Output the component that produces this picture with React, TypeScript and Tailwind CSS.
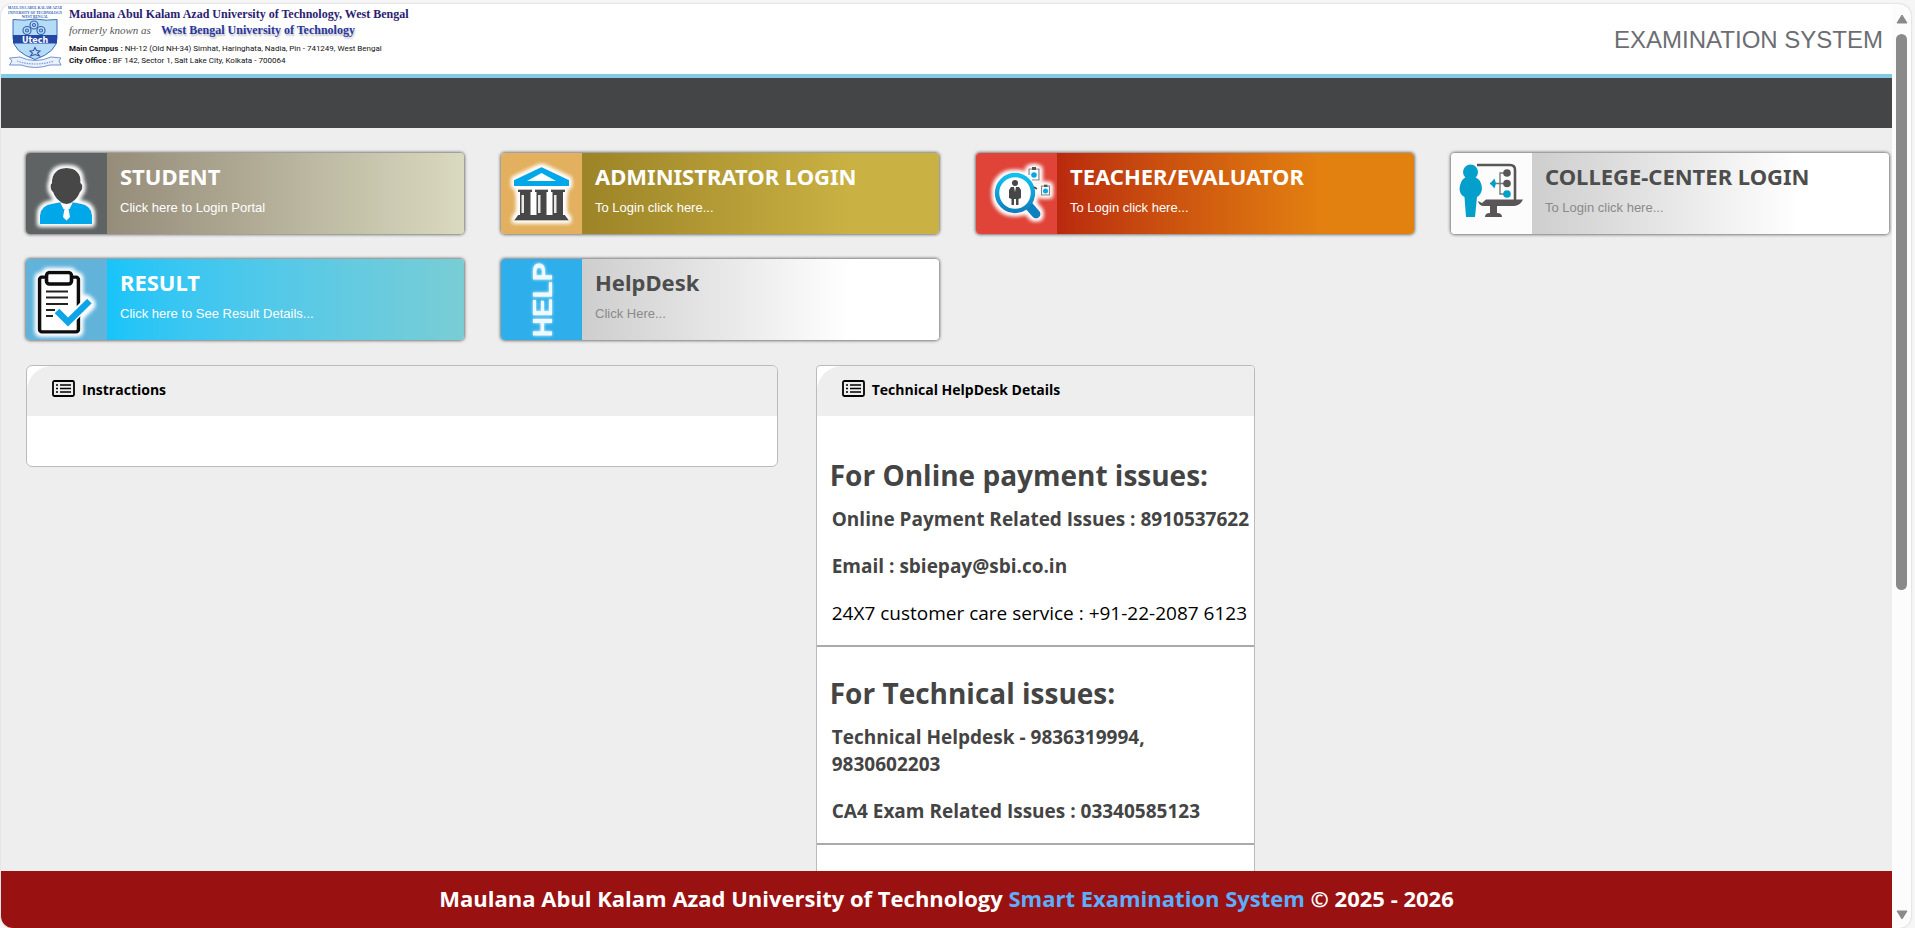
import type { ReactNode } from "react";

const uiFont = "font-['Noto_Sans',sans-serif]";
const openFont = "font-['Open_Sans','Noto_Sans',sans-serif]";
const arialFont = "font-['Liberation_Sans',Arial,sans-serif]";

function Crest() {
  return (
    <svg viewBox="0 0 54 64" className="h-16 w-[54px] shrink-0" role="img" aria-label="University crest">
      <g fill="#2f62b5" fontFamily="Liberation Serif, serif" fontWeight="700" textAnchor="middle">
        <text x="27" y="5" fontSize="3.600">MAULANA ABUL KALAM AZAD</text>
        <text x="27" y="9.500" fontSize="3.600">UNIVERSITY OF TECHNOLOGY,</text>
        <text x="27" y="14" fontSize="3.600">WEST BENGAL</text>
      </g>
      <path d="M5 15.500 Q16 17 27 15 Q38 17 49 15.500 V34 Q49 48 27 55.500 Q5 48 5 34 Z" fill="#b4dcf6" stroke="#3f6cbb" strokeWidth="1" />
      <g fill="none" stroke="#3a63b0" strokeWidth="1.200">
        <circle cx="26" cy="21" r="4" />
        <circle cx="19" cy="26.500" r="4" />
        <circle cx="33" cy="26.500" r="4" />
        <circle cx="26" cy="21" r="1.500" />
        <circle cx="19" cy="26.500" r="1.500" />
        <circle cx="33" cy="26.500" r="1.500" />
      </g>
      <path d="M5 31 H49 V39.500 H5 Z" fill="#2447a5" />
      <text x="27" y="38.500" fill="#fff" fontFamily="DejaVu Sans, sans-serif" fontWeight="700" fontSize="8" textAnchor="middle">Utech</text>
      <path d="M27 43.500 l1.500 3 3.500 .5 -2.500 2 2 3 -4.500 -1.500 -4.500 1.500 2 -3 -2.500 -2 3.500 -.5 Z" fill="none" stroke="#3a56a8" strokeWidth="1.100" />
      <path d="M1.500 54 L12 53 Q27 60 43 53 L53 54 L51 57 L53 61 H42 Q27 66 13 61 H1.500 L4 57 Z" fill="#e9f2fc" stroke="#5578c2" strokeWidth=".8" />
      <path d="M9 57 Q27 63 46 57" fill="none" stroke="#7f9bd3" strokeWidth="1.200" strokeDasharray="1.500 1" />
    </svg>
  );
}

function Glow({ id }: { id: string }) {
  return (
    <filter id={id} x="-30%" y="-30%" width="160%" height="160%">
      <feMorphology in="SourceAlpha" operator="dilate" radius="1.500" />
      <feGaussianBlur stdDeviation="2" result="halo" />
      <feFlood floodColor="#fff" />
      <feComposite in2="halo" operator="in" result="white" />
      <feMerge>
        <feMergeNode in="white" />
        <feMergeNode in="white" />
        <feMergeNode in="SourceGraphic" />
      </feMerge>
    </filter>
  );
}

const iconBox = "block size-[81px]";

function StudentIcon() {
  return (
    <svg viewBox="0 0 81 81" className={iconBox} aria-hidden="true">
      <defs><Glow id="g-student" /></defs>
      <g filter="url(#g-student)">
        <path d="M14 71 V62 Q15 52 27 50.500 L35 49 L40.500 55 L46 49 L54 50.500 Q65 52 66 62 V71 Z" fill="#04a7e9" />
        <path d="M40.500 52 L34 49 L37.500 56 L38.500 56 L37 64 L40.500 67.500 L44 64 L42.500 56 L43.500 56 L47 49 Z" fill="#fff" />
        <path d="M40.500 15 C50 15 55.500 21 54.500 30 C57.500 31 56.500 38 54 39 C52 45 46 51 40.500 51 C35 51 29 45 27 39 C24.500 38 23.500 31 26 30 C25.500 21 31 15 40.500 15 Z" fill="#474747" />
      </g>
    </svg>
  );
}

function BankIcon() {
  return (
    <svg viewBox="0 0 81 81" className={iconBox} aria-hidden="true">
      <defs><Glow id="g-bank" /></defs>
      <g filter="url(#g-bank)">
        <path d="M18 37 H63 V62 H18 Z" fill="#fff" />
        <path d="M40.500 14 L68 27 V33 H13 V27 Z" fill="#04a7e9" />
        <path d="M40.500 20 L55 28 H26 Z" fill="#fff" />
        <g fill="#474747">
          <path d="M17 36.500 H31 V39 H29.500 V62 H19 V39 H17 Z" />
          <path d="M34 36.500 H47 V39 H45.500 V62 H35.500 V39 H34 Z" />
          <path d="M50 36.500 H64 V39 H62 V62 H51.500 V39 H50 Z" />
          <path d="M17 62 H64 L68 67.500 H13 Z" />
        </g>
        <g fill="#e8e8e8">
          <path d="M20.500 42 H23 V60 H20.500 Z M37 42 H39.500 V60 H37 Z M53 42 H55.500 V60 H53 Z" />
        </g>
      </g>
    </svg>
  );
}

function TeacherIcon() {
  return (
    <svg viewBox="0 0 81 81" className={iconBox} aria-hidden="true">
      <defs>
        <Glow id="g-teacher" />
        <linearGradient id="lens" x1="0" y1="0" x2="0" y2="1">
          <stop offset="0" stopColor="#0cc3ee" />
          <stop offset="1" stopColor="#0880c0" />
        </linearGradient>
      </defs>
      <g filter="url(#g-teacher)">
        <path d="M53 53 L60 61" stroke="#0880c0" strokeWidth="9" strokeLinecap="round" />
        <circle cx="39" cy="40" r="18" fill="#fff" stroke="url(#lens)" strokeWidth="4.500" />
        <circle cx="39" cy="30" r="3" fill="#474747" />
        <path d="M35 34 H43 L45 37 V45 L42.500 46 V52 H40 V46 H38 V52 H35.500 V46 L33 45 V37 Z" fill="#474747" />
        <path d="M38 34 L39 39 L40 34 Z" fill="#fff" />
        <path d="M58 34 L61 36" stroke="#474747" strokeWidth="2" />
        <path d="M53 22 V16 H63 V27 H56" fill="#fff" stroke="#777" strokeWidth="1.200" />
        <path d="M56 14 H60 V17 H56 Z" fill="#555" />
        <circle cx="58" cy="22" r="2.800" fill="#04a7e9" />
        <rect x="65.500" y="33" width="8" height="9" fill="#fff" stroke="#888" strokeWidth="1.200" />
        <path d="M68 31.500 H71.500 V34 H68 Z" fill="#555" />
        <circle cx="69.500" cy="38" r="2.500" fill="#04a7e9" />
      </g>
    </svg>
  );
}

function CollegeIcon() {
  return (
    <svg viewBox="0 0 81 81" className={iconBox} aria-hidden="true">
      <path d="M26 12 H59 Q64 12 64 17 V47" fill="none" stroke="#5a5658" strokeWidth="2.600" />
      <path d="M27 48 L31 50 L35 46.500 H72 Q69 53 63 53 H33 Q28 53 27 48 Z" fill="#5a5658" />
      <path d="M39 52 H46 V60 Q51 60 51 64 H34 Q34 60 39 60 Z" fill="#5a5658" />
      <path d="M39 30.500 H55 M55 20 H49 V41 H55" fill="none" stroke="#777" strokeWidth="1.400" />
      <circle cx="56" cy="20" r="3.800" fill="#5a5658" />
      <circle cx="56" cy="30.500" r="3.800" fill="#5a5658" />
      <circle cx="56" cy="41" r="3.800" fill="#04a0cb" />
      <path d="M39 30.500 L43.500 25.500 L45 30.500 L43.500 35.500 Z" fill="#04a0cb" />
      <g fill="#04a0cb">
        <circle cx="19.500" cy="19" r="7.500" />
        <path d="M14 24.500 H25 Q31 28 31 36 Q30 42 26 44 L24 64 H15 L13.500 44 Q9 42 8.500 36 Q9 28 14 24.500 Z" />
      </g>
    </svg>
  );
}

function ResultIcon() {
  return (
    <svg viewBox="0 0 81 81" className={iconBox} aria-hidden="true">
      <defs><Glow id="g-result" /></defs>
      <g filter="url(#g-result)">
        <rect x="13.500" y="18" width="39" height="55" rx="2.500" fill="#fff" stroke="#0b0b0b" strokeWidth="3.600" />
        <rect x="20.500" y="13.500" width="25" height="11.500" rx="3" fill="#fff" stroke="#0b0b0b" strokeWidth="3.600" />
        <path d="M20 32.500 H42 M20 38.500 H42 M20 45 H42 M20 51 H29 M20 57 H27" stroke="#222" strokeWidth="2.200" />
        <path d="M32 51 L42 62.500 L63 42" fill="none" stroke="#fff" strokeWidth="10" />
        <path d="M31 52 L42 63 L63.500 42" fill="none" stroke="#0ba4e8" strokeWidth="6.500" />
      </g>
    </svg>
  );
}

function HelpIcon() {
  return (
    <svg viewBox="0 0 81 81" className={iconBox} aria-hidden="true">
      <defs>
        <filter id="g-help" x="-20%" y="-20%" width="140%" height="140%">
          <feGaussianBlur stdDeviation="1.500" result="soft" />
          <feMerge>
            <feMergeNode in="soft" />
            <feMergeNode in="SourceGraphic" />
          </feMerge>
        </filter>
      </defs>
      <text
        transform="rotate(-90 41 41)"
        x="41"
        y="51"
        textAnchor="middle"
        fill="#eefaff"
        fontSize="28"
        fontWeight="700"
        fontFamily="Liberation Sans, sans-serif"
        filter="url(#g-help)"
      >
        HELP
      </text>
    </svg>
  );
}

type Tile = {
  title: string;
  note: string;
  icon: ReactNode;
  iconBg: string;
  bodyBg: string;
  titleColor: string;
  noteColor: string;
};

const tiles: Tile[] = [
  {
    title: "STUDENT", note: "Click here to Login Portal", icon: <StudentIcon />,
    iconBg: "bg-[#5f6364]", bodyBg: "bg-linear-to-r from-[#958c79] to-[#dadac0]",
    titleColor: "text-white", noteColor: "text-white",
  },
  {
    title: "ADMINISTRATOR LOGIN", note: "To Login click here...", icon: <BankIcon />,
    iconBg: "bg-[#e2b05e]", bodyBg: "bg-linear-to-r from-[#9c8427] to-[#cab143] to-75%",
    titleColor: "text-white", noteColor: "text-white",
  },
  {
    title: "TEACHER/EVALUATOR", note: "To Login click here...", icon: <TeacherIcon />,
    iconBg: "bg-[#e04338]", bodyBg: "bg-linear-to-r from-[#b9290e] to-[#e38110] to-75%",
    titleColor: "text-white", noteColor: "text-white",
  },
  {
    title: "COLLEGE-CENTER LOGIN", note: "To Login click here...", icon: <CollegeIcon />,
    iconBg: "bg-[#fcfcfc]", bodyBg: "bg-linear-to-r from-[#cecece] to-white to-75%",
    titleColor: "text-[#4d4d4d]", noteColor: "text-[#8a8a8a]",
  },
  {
    title: "RESULT", note: "Click here to See Result Details...", icon: <ResultIcon />,
    iconBg: "bg-[#62b3da]", bodyBg: "bg-linear-to-r from-[#16c4f9] to-[#78cdd5]",
    titleColor: "text-white", noteColor: "text-white",
  },
  {
    title: "HelpDesk", note: "Click Here...", icon: <HelpIcon />,
    iconBg: "bg-[#2eaeea]", bodyBg: "bg-linear-to-r from-[#cecece] to-white to-75%",
    titleColor: "text-[#4d4d4d]", noteColor: "text-[#8a8a8a]",
  },
];

function TileLink({ tile }: { tile: Tile }) {
  return (
    <a href="#" className="flex overflow-hidden rounded-sm shadow-[0_0_3px_1px_#777]">
      <span className={`shrink-0 ${tile.iconBg}`}>{tile.icon}</span>
      <span className={`flex grow flex-col gap-2.5 pt-[9px] pl-[13px] ${tile.bodyBg}`}>
        <span className={`${uiFont} text-[22px] leading-7 font-bold ${tile.titleColor}`}>{tile.title}</span>
        <span className={`${arialFont} text-[13px] leading-4 ${tile.noteColor}`}>{tile.note}</span>
      </span>
    </a>
  );
}

function PanelHeader({ children }: { children: ReactNode }) {
  return (
    <h2 className={`flex h-[50px] items-start gap-[7px] rounded-tl-[25px] bg-[#eee] pt-3.5 pl-[25px] ${openFont} text-sm leading-5 font-bold text-black`}>
      <svg viewBox="0 0 23 17" className="h-[17px] w-[23px]" aria-hidden="true">
        <rect x="1" y="1" width="21" height="15" rx="1.500" fill="none" stroke="#000" strokeWidth="1.800" />
        <path d="M8 5 H19 M8 8.500 H19 M8 12 H19 M4 5 H6 M4 8.500 H6 M4 12 H6" stroke="#000" strokeWidth="1.400" />
      </svg>
      {children}
    </h2>
  );
}

const groupTitle = "pl-[13px] text-[28px] leading-11 font-bold";
const group = "flex flex-col gap-5 border-b-2 border-[#aaa] pt-[9px] pb-[18px]";
const entry = "pl-[15px] text-[19px] leading-[27px]";

export default function App() {
  return (
    <div className="h-screen bg-[#f6f6f6] pt-1 pr-1 pl-px">
      <div className="flex h-full overflow-hidden rounded-xl bg-[#fcfcfc] shadow-[0_0_2px_#bbb]">
        <div className="flex min-w-0 grow flex-col bg-[#eee]">
          <header className="flex h-[74px] shrink-0 items-start justify-between border-b-4 border-[#84cae6] bg-white pr-[9px] pl-[7px]">
            <div className="flex gap-[7px]">
              <Crest />
              <div className="pt-0.5 whitespace-nowrap">
                <h1 className="font-['Liberation_Serif',serif] text-xs leading-4 font-bold text-[#2a2170]">
                  Maulana Abul Kalam Azad University of Technology, West Bengal
                </h1>
                <p className="flex gap-2.5 font-['Liberation_Serif',serif] text-xs leading-4">
                  <i className="text-[11px] leading-4 text-[#555]">formerly known as</i>
                  <b className="text-[#27379c] [text-shadow:1px_2px_2px_#bbb]">West Bengal University of Technology</b>
                </p>
                <p className="pt-[5px] font-['Roboto',sans-serif] text-[8px] leading-3 text-[#111]">
                  <b>Main Campus :</b> NH-12 (Old NH-34) Simhat, Haringhata, Nadia, Pin - 741249, West Bengal
                </p>
                <p className="font-['Roboto',sans-serif] text-[8px] leading-3 text-[#111]">
                  <b>City Office :</b> BF 142, Sector 1, Salt Lake City, Kolkata - 700064
                </p>
              </div>
            </div>
            <p className={`pt-5 ${arialFont} text-2xl leading-8 text-[#6c6e73]`}>EXAMINATION SYSTEM</p>
          </header>
          <nav className="h-[50px] shrink-0 bg-[#444546]" aria-label="Main menu" />
          <main className="min-h-0 grow overflow-hidden pt-[25px] pr-[3px] pl-[25px]">
            <div className="grid grid-cols-4 gap-x-[37px] gap-y-[25px]">
              {tiles.map((tile) => (
                <TileLink key={tile.title} tile={tile} />
              ))}
            </div>
            <div className="flex items-start gap-[38px] pt-[25px]">
              <section className="w-[40.35%] overflow-hidden rounded-md border border-[#bbb] bg-white pb-[50px]">
                <PanelHeader>Instractions</PanelHeader>
              </section>
              <section className={`w-[23.6%] overflow-hidden rounded-sm border border-[#bbb] bg-white pb-40 whitespace-nowrap ${openFont} text-[#444]`}>
                <PanelHeader>Technical HelpDesk Details</PanelHeader>
                <h3 className={`pt-[37px] ${groupTitle}`}>For Online payment issues:</h3>
                <div className={group}>
                  <p className={`${entry} font-bold`}>Online Payment Related Issues : 8910537622</p>
                  <p className={`${entry} font-bold`}>Email : sbiepay@sbi.co.in</p>
                  <p className={`${entry} text-black`}>24X7 customer care service : +91-22-2087 6123</p>
                </div>
                <h3 className={`pt-6 ${groupTitle}`}>For Technical issues:</h3>
                <div className={group}>
                  <p className={`${entry} font-bold`}>
                    Technical Helpdesk - 9836319994,
                    <br />
                    9830602203
                  </p>
                  <p className={`${entry} font-bold`}>CA4 Exam Related Issues : 03340585123</p>
                </div>
              </section>
            </div>
          </main>
          <footer className={`h-[57px] shrink-0 bg-[#991111] pt-[11px] text-center ${openFont} text-[22px] leading-8 font-bold text-white`}>
            Maulana Abul Kalam Azad University of Technology <a href="#" className="text-[#5caeff]">Smart Examination System</a> © 2025 - 2026
          </footer>
        </div>
        <div className="flex w-[19px] shrink-0 flex-col items-center justify-between pt-2.5 pb-2" aria-hidden="true">
          <div className="flex grow flex-col items-center gap-2.5">
            <svg viewBox="0 0 12 10" className="h-2.5 w-3">
              <path d="M6 1 L11 9 H1 Z" fill="#8a8a8a" stroke="#8a8a8a" strokeLinejoin="round" />
            </svg>
            <div className="h-[62%] w-[11px] rounded-full bg-[#8a8a8a]" />
          </div>
          <svg viewBox="0 0 12 10" className="h-2.5 w-3">
            <path d="M6 9 L11 1 H1 Z" fill="#8a8a8a" stroke="#8a8a8a" strokeLinejoin="round" />
          </svg>
        </div>
      </div>
    </div>
  );
}
